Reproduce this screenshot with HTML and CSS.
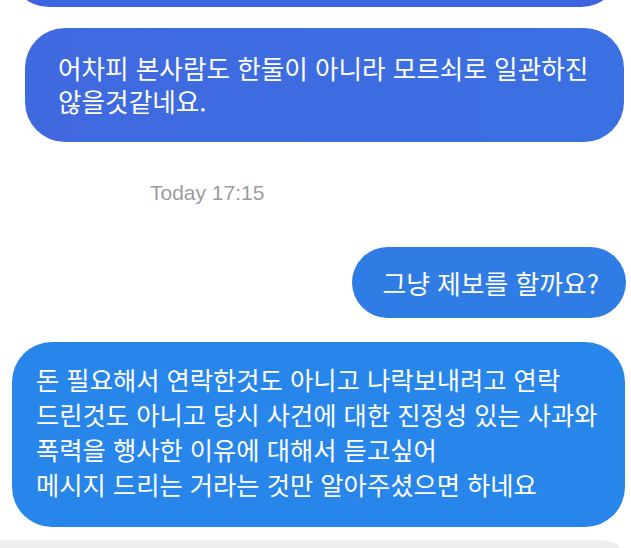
FILE: index.html
```html
<!DOCTYPE html>
<html lang="ko">
  <head>
    <meta charset="UTF-8" />
    <meta name="viewport" content="width=device-width, initial-scale=1.0" />
    <title>대화</title>
    <link rel="stylesheet" href="styles.css">
  </head>
  <body>
    <div class="chat">
      <!-- 위에서 잘린 이전 메시지 -->
      <div class="bubble bubble-prev"></div>

      <div class="bubble bubble-first">
        어차피 본사람도 한둘이 아니라 모르쇠로 일관하진<br>
        않을것같네요.
      </div>

      <div class="time">Today 17:15</div>

      <div class="bubble bubble-short">그냥 제보를 할까요?</div>

      <div class="bubble bubble-long">
        돈 필요해서 연락한것도 아니고 나락보내려고 연락<br>
        드린것도 아니고 당시 사건에 대한 진정성 있는 사과와<br>
        폭력을 행사한 이유에 대해서 듣고싶어<br>
        메시지 드리는 거라는 것만 알아주셨으면 하네요
      </div>

      <!-- 아래에서 잘린 다음 메시지 -->
      <div class="bubble bubble-next"></div>
    </div>
  </body>
</html>
```

FILE: styles.css
```css
html,
body {
  margin: 0;
  padding: 0;
  background-color: #fff;
  overflow: hidden;
}
body {
  width: 631px;
  height: 548px;
  font-family: "Noto Sans CJK KR", "Noto Sans", sans-serif;
}
.chat {
  display: flex;
  flex-direction: column;
  align-items: flex-start;
}
.bubble {
  color: #fff;
  border-radius: 40px;
  white-space: nowrap;
  font-size: 25.5px;
  box-sizing: border-box;
}
.bubble-prev {
  width: 612px;
  height: 80px;
  margin: -73px 0 0 9px;
  background-color: #3d64de;
}
.bubble-first {
  width: 599px;
  margin: 21px 0 0 25px;
  padding: 23px 10px 25px 33px;
  line-height: 33px;
  background: linear-gradient(90deg, #4169df, #3a70e2);
  font-size: 25.6px;
}
.time {
  margin: 39px 0 0 150px;
  font-family: "Liberation Sans", Arial, sans-serif;
  font-size: 21px;
  line-height: 24px;
  color: #9c9c9c;
}
.bubble-short {
  align-self: flex-end;
  margin: 42px 5px 0 0;
  padding: 19px 27px 19px 30px;
  line-height: 33px;
  border-radius: 36px;
  background-color: #2f7de4;
  font-size: 25.8px;
}
.bubble-long {
  width: 613px;
  margin: 24px 0 0 12px;
  padding: 20px 6px 25px 24px;
  line-height: 35px;
  background-color: #2886ea;
  font-size: 25.3px;
}
.bubble-next {
  width: 660px;
  height: 8px;
  margin: 13px 0 0 -40px;
  border-radius: 0 24px 0 0 / 0 8px 0 0;
  background-color: #efefef;
}
```
